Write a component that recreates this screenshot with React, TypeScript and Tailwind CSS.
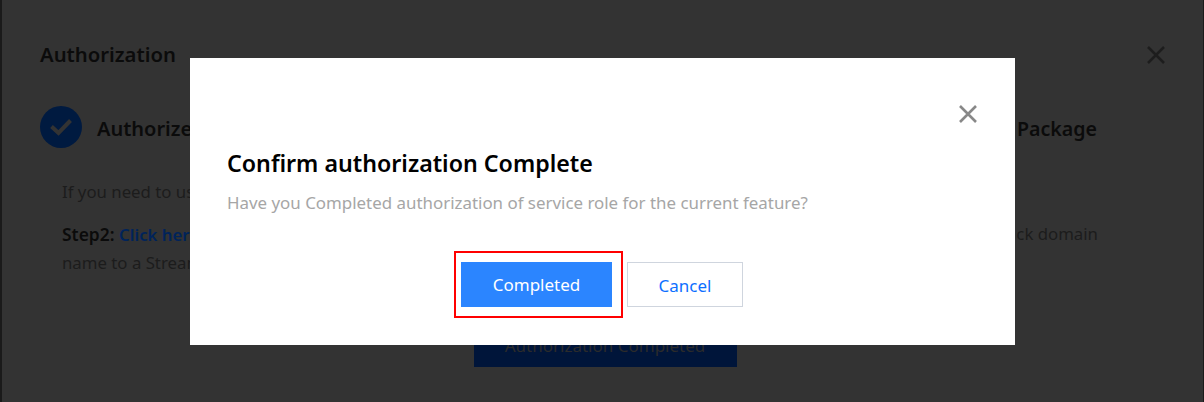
import React from "react";

function Cross({ className }: { className: string }) {
  return (
    <svg viewBox="0 0 18 18" className={className} fill="none" stroke="currentColor" strokeWidth="2.6">
      <path d="M1 1L17 17M17 1L1 17" />
    </svg>
  );
}

export default function App() {
  return (
    <div className="relative h-[402px] w-[1204px] overflow-hidden bg-[#1a1a1a] font-['Noto_Sans','Open_Sans',sans-serif]">
      <div className="ml-[2px] mr-[1px] flex h-[402px] flex-col bg-[#333333] pl-[38px] pr-[37px] pt-[42px]">
        <div className="flex h-[26px] items-center justify-between">
          <span className="mt-[-2px] text-[20.3px] font-semibold leading-[26px] text-[#0b0b0b]">Authorization</span>
          <Cross className="mr-[1px] h-[18px] w-[18px] text-[#1d1d1d]" />
        </div>
        <div className="mt-[38px] flex h-[42px] items-center justify-between">
          <div className="flex items-center gap-[15px]">
            <div className="flex h-[42px] w-[42px] items-center justify-center rounded-full bg-[#001a40]">
              <svg viewBox="0 0 22 18" className="h-[18px] w-[22px] text-[#333333]" fill="none" stroke="currentColor" strokeWidth="4">
                <path d="M1.5 8.5L8.5 15L20.5 2.5" />
              </svg>
            </div>
            <span className="pt-[3px] text-[20px] font-semibold text-[#0b0b0b]">Authorize</span>
          </div>
          <span className="mr-[69px] pt-[3px] text-[19.6px] font-semibold text-[#0b0b0b]">Package</span>
        </div>
        <div className="ml-[22px] mt-[30px] text-[16.8px] leading-[28px] text-[#1c1c1c]">
          <p>If you need to use</p>
          <div className="mt-[14px] flex justify-between">
            <p>
              <span className="text-[17.4px] font-semibold text-[#0b0b0b]">Step2: </span>
              <span className="font-semibold text-[#00235a]">Click here</span>
            </p>
            <span className="mr-[68px]">ck domain</span>
          </div>
          <p>name to a Stream</p>
        </div>
        <div className="mt-[50px] flex justify-center pl-[4px]">
          <div className="flex h-[40px] w-[263px] items-center justify-center bg-[#00153a] pb-[2px] text-[17px] text-[#2b2b2b]">
            Authorization Completed
          </div>
        </div>
      </div>

      <div className="absolute left-[190px] top-[58px] flex h-[287px] w-[825px] flex-col bg-white pl-[37px] pr-[38px] pt-[47px]">
        <div className="flex justify-end">
          <Cross className="h-[18px] w-[18px] text-[#888888]" />
        </div>
        <h2 className="mt-[25px] text-[23.2px] font-semibold leading-[30px] text-black">Confirm authorization Complete</h2>
        <p className="mt-[13px] text-[16.9px] leading-[24px] text-[#a6a6a6]">
          Have you Completed authorization of service role for the current feature?
        </p>
        <div className="mt-[36px] flex items-center pl-[227px]">
          <div className="flex h-[67px] w-[169px] items-center border-2 border-[#ff0000] pl-[5px]">
            <button className="h-[45px] w-[151px] bg-[#2b85ff] pt-[1px] text-[17px] text-white">Completed</button>
          </div>
          <button className="ml-[4px] h-[45px] w-[116px] border border-[#cfd5de] bg-white pt-[3px] text-[17px] text-[#0d6fff]">
            Cancel
          </button>
        </div>
      </div>
    </div>
  );
}
